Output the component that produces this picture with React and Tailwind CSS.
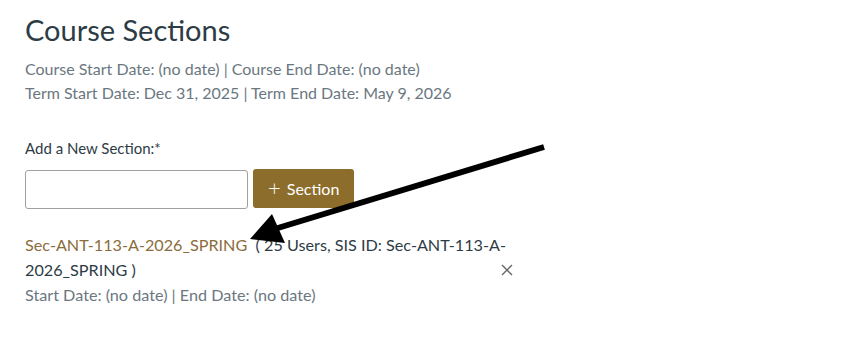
import React from 'react';

export default function App() {
  return (
    <div className="relative w-[864px] h-[355px] bg-white overflow-hidden font-['Lato','Liberation_Sans',sans-serif]">
      <div className="pl-[25px] pt-[12px] w-[540px]">
        <h1 className="text-[29px] leading-[36px] text-[#2d3b45]">Course Sections</h1>
        <div className="mt-[9px] text-[16px] leading-[24px] text-[#6b7780]">
          <p>Course Start Date: (no date) | Course End Date: (no date)</p>
          <p>Term Start Date: Dec 31, 2025 | Term End Date: May 9, 2026</p>
        </div>

        <label className="block mt-[33px] text-[15px] leading-[20px] text-[#2d3b45]">Add a New Section:*</label>
        <div className="flex items-start gap-[5px] mt-[12px]">
          <input
            type="text"
            className="w-[223px] h-[39px] border border-[#a0a0a0] rounded-[3px] bg-white outline-none"
          />
          <button className="h-[39px] px-[15px] -mt-[1px] rounded-[3px] bg-[#8c6d2c] text-white text-[16px] flex items-center gap-[6px]">
            <span className="text-[22px] leading-none font-light -mt-[2px]">+</span>
            <span>Section</span>
          </button>
        </div>

        <div className="relative mt-[23px] w-[490px] text-[16.2px] leading-[25px] text-[#2d3b45]">
          <p>
            <a className="text-[#8b6c3c]">Sec-ANT-113-A-2026_SPRING</a>
            {'\u00a0 '}( 25 Users, SIS ID: Sec-ANT-113-A-2026_SPRING )
          </p>
          <p className="text-[#6b7780]">Start Date: (no date) | End Date: (no date)</p>
          <button className="absolute left-[475px] top-[31px] text-[#666]">
            <svg width="14" height="14" viewBox="0 0 14 14" fill="none" stroke="currentColor" strokeWidth="1.4">
              <path d="M2 2 L12 12 M12 2 L2 12" />
            </svg>
          </button>
        </div>
      </div>

      <svg className="absolute left-0 top-0 pointer-events-none" width="864" height="355" viewBox="0 0 864 355">
        <line x1="544" y1="147" x2="268" y2="231" stroke="#000" strokeWidth="6" />
        <polygon points="250,239 272,214 285,243" fill="#000" />
      </svg>
    </div>
  );
}
